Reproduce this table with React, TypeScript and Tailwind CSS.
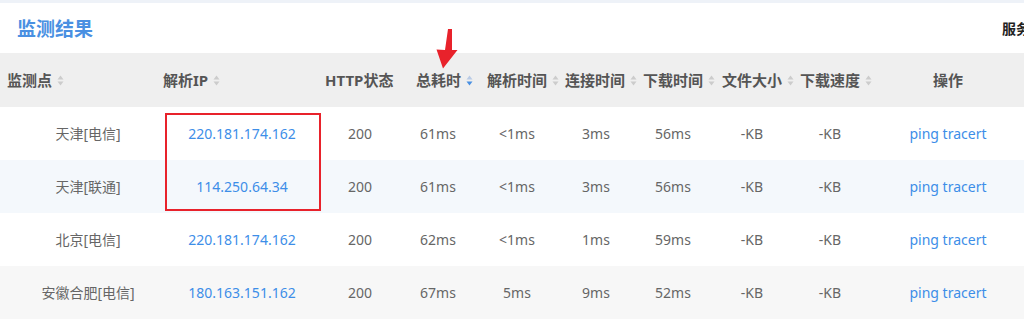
import type { ReactNode } from "react";

type Row = {
  site: string;
  ip: string;
  status: string;
  total: string;
  dns: string;
  connect: string;
  download: string;
  size: string;
  speed: string;
  bg: string;
};

const rows: Row[] = [
  { site: "天津[电信]", ip: "220.181.174.162", status: "200", total: "61ms", dns: "<1ms", connect: "3ms", download: "56ms", size: "-KB", speed: "-KB", bg: "bg-white" },
  { site: "天津[联通]", ip: "114.250.64.34", status: "200", total: "61ms", dns: "<1ms", connect: "3ms", download: "56ms", size: "-KB", speed: "-KB", bg: "bg-[#f4f8fc]" },
  { site: "北京[电信]", ip: "220.181.174.162", status: "200", total: "62ms", dns: "<1ms", connect: "1ms", download: "59ms", size: "-KB", speed: "-KB", bg: "bg-white" },
  { site: "安徽合肥[电信]", ip: "180.163.151.162", status: "200", total: "67ms", dns: "5ms", connect: "9ms", download: "52ms", size: "-KB", speed: "-KB", bg: "bg-[#f7f7f7]" },
];

const SortIcon = ({ active }: { active?: boolean }) => (
  <svg width="7" height="11" viewBox="0 0 7 11" className="ml-[5px] shrink-0">
    <path d="M3.5 0.5 L6.5 4.5 L0.5 4.5 Z" fill={active ? "#b9cbe6" : "#cccccc"} />
    <path d="M3.5 10.5 L6.5 6.5 L0.5 6.5 Z" fill={active ? "#4a90e2" : "#cccccc"} />
  </svg>
);

const Head = ({ w, children, sort, active }: { w: string; children: ReactNode; sort?: boolean; active?: boolean }) => (
  <div className={`${w} flex items-center whitespace-nowrap`}>
    <span>{children}</span>
    {sort && <SortIcon active={active} />}
  </div>
);

const App = () => {
  return (
    <div className="relative w-[1024px] h-[324px] overflow-hidden bg-white font-['Noto_Sans','Noto_Sans_CJK_SC',sans-serif]">
      <div className="h-[3px] bg-[#eef2f8]" />
      <div className="flex h-[50px] items-center justify-between pl-[17px]">
        <h2 className="text-[19px] font-bold text-[#4a90e2] font-['Noto_Sans_CJK_SC',sans-serif]">监测结果</h2>
        <span className="w-[22px] overflow-hidden whitespace-nowrap text-[14px] font-bold text-[#222] font-['Noto_Sans_CJK_SC',sans-serif]">服务器</span>
      </div>

      <div className="flex h-[54px] items-center bg-[#efefef] pl-[7px] text-[15px] font-bold text-[#555]">
        <Head w="w-[156px]" sort>监测点</Head>
        <Head w="w-[162px]" sort>解析IP</Head>
        <Head w="w-[91px]">HTTP状态</Head>
        <Head w="w-[71px]" sort active>总耗时</Head>
        <Head w="w-[78px]" sort>解析时间</Head>
        <Head w="w-[78px]" sort>连接时间</Head>
        <Head w="w-[79px]" sort>下载时间</Head>
        <Head w="w-[78px]" sort>文件大小</Head>
        <Head w="w-[133px]" sort>下载速度</Head>
        <Head w="w-[60px]">操作</Head>
      </div>

      {rows.map((r, i) => (
        <div
          key={i}
          className={`grid h-[53px] grid-cols-[176px_132px_104px_52px_106px_52px_102px_56px_100px_136px] items-center text-center text-[14px] text-[#666] whitespace-nowrap ${r.bg}`}
        >
          <div>{r.site}</div>
          <div className="text-[#3d8ee8]">{r.ip}</div>
          <div>{r.status}</div>
          <div>{r.total}</div>
          <div>{r.dns}</div>
          <div>{r.connect}</div>
          <div>{r.download}</div>
          <div>{r.size}</div>
          <div>{r.speed}</div>
          <div className="text-[#3d8ee8]">ping tracert</div>
        </div>
      ))}

      {/* annotation box */}
      <div className="absolute left-[165px] top-[113px] h-[98px] w-[156px] border-2 border-[#e8222b]" />
      {/* annotation arrow */}
      <svg className="absolute left-[430px] top-[25px]" width="35" height="48" viewBox="430 25 35 48">
        <path d="M448 29 L452 29 L452 50 L457.5 50 L443 68.5 L436.5 49.5 L445 50 Z" fill="#e8222b" />
      </svg>
    </div>
  );
};

export default App;
